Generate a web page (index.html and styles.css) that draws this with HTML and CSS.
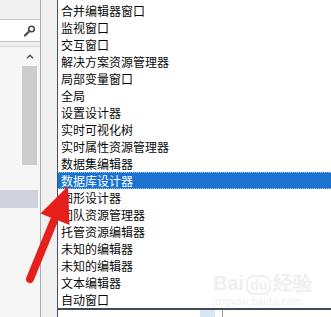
FILE: index.html
```html
<!DOCTYPE html>
<html>

<head>
    <title>视图菜单</title>
    <link rel="stylesheet" href="styles.css">
</head>

<body>
    <div class="screen">
        <div class="side">
            <div class="pane">
                <div class="pane-top"></div>
                <div class="search">
                    <svg class="search-icon" width="14" height="14" viewBox="0 0 14 14">
                        <circle cx="8.5" cy="5" r="2.8" fill="none" stroke="#4a4a4a" stroke-width="1.6"/>
                        <line x1="6.5" y1="7" x2="2" y2="11.5" stroke="#4a4a4a" stroke-width="2.2" stroke-linecap="round"/>
                    </svg>
                </div>
                <div class="tree">
                    <div class="tree-space"></div>
                    <div class="tree-row selected"></div>
                    <div class="scrollbar">
                        <div class="scroll-up">
                            <svg width="8" height="5" viewBox="0 0 8 5">
                                <polyline points="1,4.2 4,1.2 7,4.2" fill="none" stroke="#505050" stroke-width="1.5"/>
                            </svg>
                        </div>
                        <div class="scroll-thumb"></div>
                    </div>
                </div>
            </div>
        </div>

        <div class="menu-col">
            <div class="menu">
                <ul class="items">
                    <li>合并编辑器窗口</li>
                    <li>监视窗口</li>
                    <li>交互窗口</li>
                    <li>解决方案资源管理器</li>
                    <li>局部变量窗口</li>
                    <li>全局</li>
                    <li>设置设计器</li>
                    <li>实时可视化树</li>
                    <li>实时属性资源管理器</li>
                    <li>数据集编辑器</li>
                    <li class="active">数据库设计器</li>
                    <li>图形设计器</li>
                    <li>团队资源管理器</li>
                    <li>托管资源编辑器</li>
                    <li>未知的编辑器</li>
                    <li>未知的编辑器</li>
                    <li>文本编辑器</li>
                    <li>自动窗口</li>
                </ul>
            </div>
            <div class="menu-foot">
                <div class="foot-gap"></div>
                <div class="foot-blue"></div>
                <div class="foot-line"></div>
            </div>
        </div>
    </div>

    <!-- watermark -->
    <div class="mark">
        <div class="mark-top">Bai<span class="paw">du</span>经验</div>
        <div class="mark-url">jingyan.baidu.com</div>
    </div>

    <!-- red pointer arrow -->
    <svg class="arrow" width="331" height="317" viewBox="0 0 331 317">
        <line x1="30" y1="279" x2="55" y2="218" stroke="#e5201c" stroke-width="8" stroke-linecap="round"/>
        <polygon points="68,186 69.5,225 40.5,213.5" fill="#e5201c"/>
    </svg>
</body>

</html>
```

FILE: styles.css
```css
body {
    margin: 0;
    width: 331px;
    height: 317px;
    overflow: hidden;
    background-color: #fff;
    font-family: "Noto Sans CJK SC", "Liberation Sans", sans-serif;
    position: relative;
}

.screen {
    display: flex;
    height: 317px;
}

.side {
    width: 57px;
    flex: none;
    display: flex;
    background-color: #f0f0f0;
}

.pane {
    width: 40px;
    display: flex;
    flex-direction: column;
    border-right: 1px solid #ababab;
}

.pane-top {
    height: 19px;
}

.search {
    height: 21px;
    background-color: #fff;
    border-top: 1px solid #c4c4c4;
    border-bottom: 1px solid #c4c4c4;
    display: flex;
    justify-content: flex-end;
    align-items: center;
    padding-right: 3px;
}

.tree {
    flex: 1;
    margin-top: 4px;
    background-color: #f6f6f6;
    border-top: 1px solid #d6d6d6;
    position: relative;
}

.tree-space {
    height: 143px;
}

.tree-row {
    height: 18px;
}

.tree-row.selected {
    background-color: #cdd2dd;
    margin-right: 2px;
}

.scrollbar {
    position: absolute;
    left: 22px;
    top: 0;
    width: 15px;
}

.scroll-up {
    height: 19px;
    display: flex;
    justify-content: center;
    align-items: center;
}

.scroll-thumb {
    height: 99px;
    background-color: #cdcdcd;
}

.menu-col {
    flex: 1;
    display: flex;
    flex-direction: column;
    border-left: 1px solid #48525e;
}

.menu {
    height: 308px;
    overflow: hidden;
    border-bottom: 2px solid #3f4b58;
}

.items {
    list-style: none;
    margin: 2px 0 0 0;
    padding: 0;
}

.items li {
    height: 17px;
    line-height: 17px;
    font-size: 12px;
    color: #0a0a0a;
    padding-left: 3px;
    white-space: nowrap;
}

.items li.active {
    background-color: #1b73cf;
    color: #fff;
    border-top: 1px dotted #9fc4ea;
    border-bottom: 1px dotted #9fc4ea;
    height: 15px;
    line-height: 15px;
}

.menu-foot {
    flex: 1;
    display: flex;
}

.foot-gap {
    width: 142px;
}

.foot-blue {
    width: 15px;
    background-color: #d7e6f4;
}

.foot-line {
    width: 7px;
    border-right: 1px solid #9a9a9a;
}

.mark {
    position: absolute;
    left: 213px;
    top: 272px;
    color: #efefef;
    font-family: "Liberation Sans", sans-serif;
}

.mark-top {
    font-size: 20px;
    font-weight: bold;
    line-height: 22px;
}

.paw {
    font-size: 14px;
    border-radius: 8px;
    border: 2px solid #efefef;
    padding: 0 2px;
    margin: 0 2px;
}

.mark-url {
    font-size: 10px;
    line-height: 12px;
    letter-spacing: 0.5px;
}

.arrow {
    position: absolute;
    left: 0;
    top: 0;
    pointer-events: none;
}
```
